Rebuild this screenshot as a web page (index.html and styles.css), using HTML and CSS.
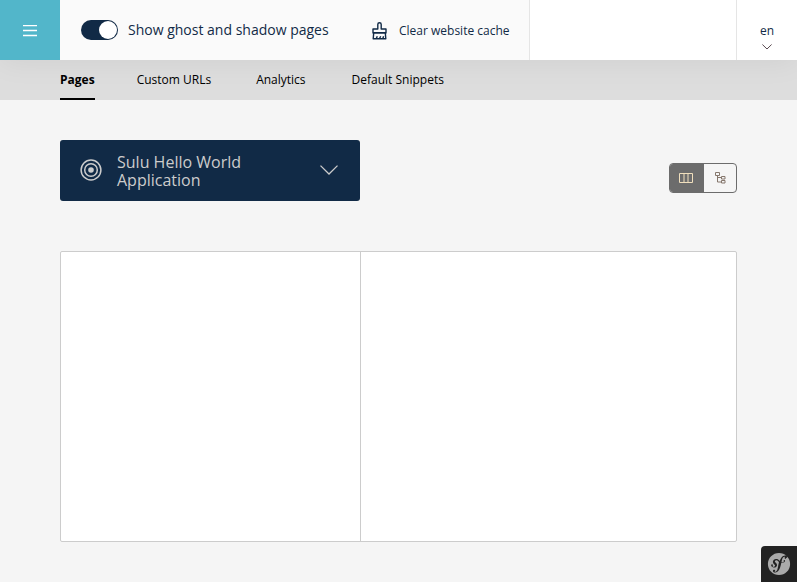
FILE: index.html
```html
<!DOCTYPE html>
<html lang="en">
<head>
<meta charset="utf-8">
<title>Pages</title>
<link rel="stylesheet" href="styles.css">
</head>
<body>
<header class="toolbar">
  <button class="menu" aria-label="Menu">
    <svg width="14" height="12" viewBox="0 0 14 12" fill="none" stroke="#fff" stroke-width="1.3"><path d="M0 .5h14M0 5.5h14M0 10.5h14"/></svg>
  </button>
  <div class="actions">
    <span class="toggle"><span class="knob"></span></span>
    <span class="toggle-label">Show ghost and shadow pages</span>
    <svg class="brush" width="15" height="18" viewBox="0 0 15 18" fill="none" stroke="#112a46" stroke-width="1.4" stroke-linejoin="round"><path d="M5.800 7V2.500a1.700 1.700 0 0 1 3.400 0V7h4.800v4H1V7zM1.700 11 1.200 16.800h12.600L13.300 11M4.300 16.500l1-2.300M7.500 16.500l1.200-2.300M10.800 16.500l.8-2.300M1 10.700h13"/></svg>
    <span class="clear">Clear website cache</span>
  </div>
  <div class="locale">
    <span>en</span>
    <svg width="10" height="6" viewBox="0 0 10 6" fill="none" stroke="#5a4a50"><path d="M.4.5 5 5 9.600.5"/></svg>
  </div>
</header>
<nav class="tabs">
  <a class="tab active">Pages</a>
  <a class="tab">Custom URLs</a>
  <a class="tab">Analytics</a>
  <a class="tab">Default Snippets</a>
</nav>
<main class="content">
  <div class="heading">
    <div class="webspace">
      <svg class="target" width="22" height="22" viewBox="0 0 22 22" fill="none" stroke="#ccc" stroke-width="1.5"><circle cx="11" cy="11" r="9.900"/><circle cx="11" cy="11" r="6.300"/><circle cx="11" cy="11" r="2.800" fill="#ccc" stroke="none"/></svg>
      <span class="webspace-name">Sulu Hello World Application</span>
      <svg class="chevron" width="18" height="10" viewBox="0 0 18 10" fill="none" stroke="#ccc" stroke-width="1.300"><path d="M.5.600 9 9 17.500.600"/></svg>
    </div>
    <div class="views">
      <span class="view selected"><svg width="14" height="10" viewBox="0 0 14 10" fill="none" stroke="#f0dfbd"><path d="M.5.5h13v9H.5zM5 .5v9M9 .5v9"/></svg></span>
      <span class="view"><svg width="11" height="12" viewBox="0 0 11 12" fill="none" stroke="#85776c"><path d="M.5.5h4v3h-4zM6.500 4.500h3.500v2.500h-3.500zM6.500 8.500h3.500v2.500h-3.500zM2.500 3.500V10h4M2.500 5.500h4"/></svg></span>
    </div>
  </div>
  <div class="columns">
    <div class="column"></div>
    <div class="column wide"></div>
  </div>
</main>
<div class="debug">
  <svg width="24" height="24" viewBox="0 0 24 24" fill="#aaa"><path d="M12 .9C5.800.9.9 5.800.9 12a11.100 11.100 0 1 0 22.200 0A11.100 11.100 0 0 0 12 .9zm6.500 6c-.6 0-.9-.3-.9-.8 0-.2 0-.4.2-.6l.2-.4c0-.3-.5-.4-.6-.4-1.800.1-2.300 2.500-2.700 4.400l-.2 1c1 .2 1.800 0 2.200-.3.6-.4-.2-.7-.1-1.200.1-.3.5-.5.7-.6.5 0 .7.5.7.9 0 .7-1 1.800-3 1.800l-.6-.1-.6 2.400c-.4 1.600-.8 3.800-2.400 5.700-1.400 1.700-2.900 1.900-3.500 1.900-1.200 0-1.900-.6-2-1.500 0-.8.7-1.300 1.200-1.300.6 0 1.100.5 1.100 1s-.2.6-.4.6c-.1.1-.3.2-.3.4 0 .1.1.3.4.3.5 0 .8-.3 1.100-.5 1.200-.9 1.600-2.700 2.200-5.700l.1-.7.7-3.200c-.8-.6-1.300-1.400-2.400-1.700-.6-.1-1.100.1-1.500.5-.4.5-.2 1.100.2 1.500l.7.6c.7.8 1.200 1.600 1 2.500-.3 1.500-2 2.600-4 1.900-1.800-.6-2-1.800-1.800-2.500.2-.6.6-.7 1.100-.6.5.2.6.7.6 1.200l-.1.3c-.2.1-.3.3-.3.4-.1.4.4.6.7.7.7.3 1.600-.2 1.800-.8.2-.6-.2-1.100-.4-1.200l-.8-.9c-.4-.4-1.200-1.500-.8-2.800.2-.5.5-1 .9-1.400 1-.8 2-.8 3-.6 1.300.4 1.900 1.200 2.800 1.900.5-1.300 1.100-2.600 2-3.800.9-1 2-1.700 3.300-1.800 1.200 0 2.200.5 2.200 1.400 0 .4-.2 1.100-1 1.100z"/></svg>
</div>
</body>
</html>
```
FILE: styles.css
```css
* { box-sizing: border-box; }
body {
  margin: 0;
  height: 582px;
  overflow: hidden;
  background: #f5f5f5;
  color: #112a46;
  font: 12px/16px "Open Sans", "Noto Sans", sans-serif;
}
svg { display: block; flex: none; }
.toolbar {
  display: flex;
  position: relative;
  height: 60px;
  background: #fff;
  box-shadow: 0 2px 30px rgba(0, 0, 0, .06);
}
.menu {
  display: flex;
  align-items: center;
  justify-content: center;
  width: 60px;
  border: 0;
  padding: 1px 0 0;
  background: #52b6ca;
}
.actions {
  display: flex;
  align-items: center;
  width: 470px;
  padding-left: 21px;
  border-right: 1px solid #e5e5e5;
  background: #fafafa;
  white-space: nowrap;
}
.toggle {
  width: 37px;
  height: 20px;
  border-radius: 10px;
  background: #112a46;
}
.knob {
  display: block;
  width: 18px;
  height: 18px;
  margin: 1px 1px 0 18px;
  border-radius: 50%;
  background: #fff;
}
.toggle-label { width: 201px; margin-left: 10px; font-size: 14px; }
.brush { margin: 2px 12px 0 43px; }
.clear { padding-top: 2px; }
.locale {
  display: flex;
  flex-direction: column;
  align-items: center;
  width: 61px;
  margin-left: auto;
  padding-top: 23px;
  border-left: 1px solid #e5e5e5;
}
.locale svg { margin-top: 5px; }
.tabs {
  display: flex;
  gap: 42px;
  height: 40px;
  padding-left: 60px;
  background: #ddd;
  color: #000;
}
.tab { height: 40px; padding-top: 12px; white-space: nowrap; }
.tab + .tab { margin-right: 3px; }
.tab:last-child { margin-left: 1px; }
.active { border-bottom: 2px solid #000; font-weight: 700; }
.content {
  position: relative;
  height: 482px;
  padding: 40px 60px;
  background: #f5f5f5;
}
.heading { display: flex; justify-content: space-between; height: 111px; }
.webspace {
  display: flex;
  align-items: center;
  width: 300px;
  height: 61px;
  padding: 0 22px 0 20px;
  border-radius: 3px;
  background: #112a46;
  color: #ccc;
  font-size: 16px;
  line-height: 18px;
}
.target, .chevron { margin-bottom: 2px; }
.webspace-name { width: 160px; margin: 0 auto 0 15px; padding-top: 1px; }
.views {
  display: flex;
  width: 68px;
  height: 30px;
  margin-top: 23px;
  border: 1px solid #6c6c6c;
  border-radius: 4px;
  overflow: hidden;
}
.view { display: flex; flex: 1; align-items: center; justify-content: center; }
.selected { flex: 0 0 34px; padding-right: 2px; background: #6c6c6c; }
.columns {
  display: flex;
  height: 291px;
  border: 1px solid #ccc;
  border-radius: 2px;
  background: #fff;
}
.column { width: 300px; border-right: 1px solid #ccc; }
.wide { flex: 1; border: 0; }
.debug {
  display: flex;
  position: fixed;
  right: 0;
  bottom: 0;
  align-items: center;
  justify-content: center;
  width: 36px;
  height: 36px;
  border-top-left-radius: 4px;
  background: #222;
}
```
